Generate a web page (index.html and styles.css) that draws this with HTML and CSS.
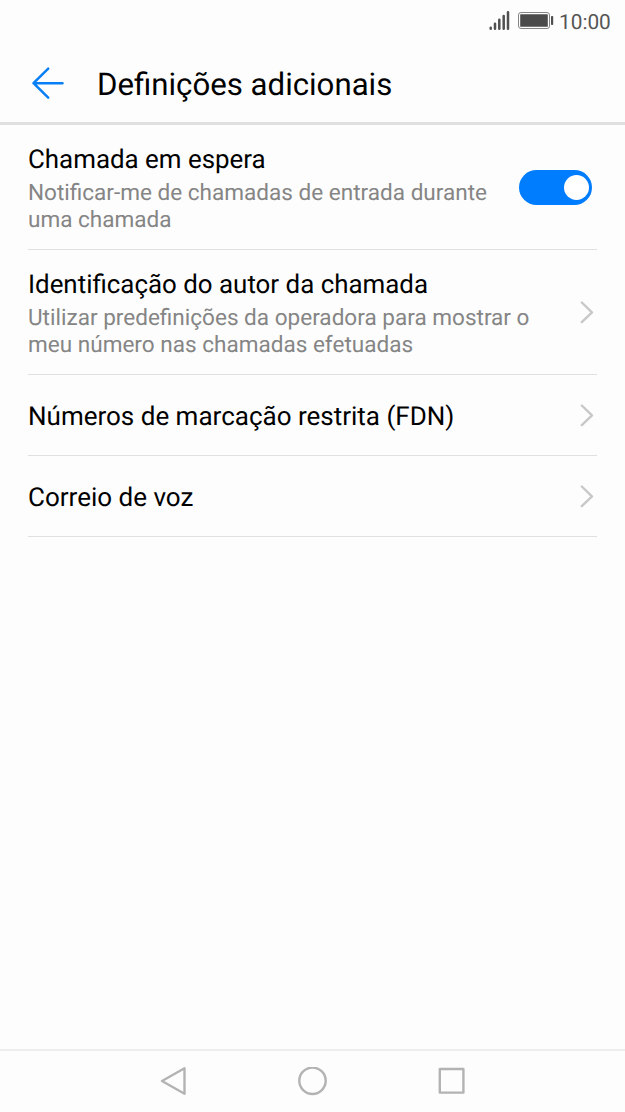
FILE: index.html
```html
<!DOCTYPE html>
<html lang="pt">
<head>
<meta charset="utf-8">
<title>Definições adicionais</title>
<link rel="stylesheet" href="styles.css">
</head>
<body>
<div class="screen">
  <div class="status">
    <svg class="signal" width="22" height="44" viewBox="0 0 22 44"><path d="M1.700 27.700v1M6 23.700v5M10.300 19.700v9M14.700 16v12.700M19 12.300v16.400" fill="none" stroke="#505050" stroke-width="2.500" stroke-linecap="round"/></svg>
    <svg class="battery" width="37" height="44" viewBox="0 0 37 44"><rect x="1.500" y="12.500" width="31" height="16" rx="2.500" fill="none" stroke="#858585"/><rect x="3.200" y="14.200" width="27.600" height="12.600" rx=".5" fill="#4b4b4b"/><rect x="34" y="16" width="2.200" height="9" rx=".8" fill="#505050"/></svg>
    <span class="clock">10:00</span>
  </div>
  <header class="header">
    <svg class="back" width="34" height="34" viewBox="0 0 34 34"><path d="M31.500 17.200H2.500M17.200 2.700L2.500 17.200l14.700 14.500" fill="none" stroke="#087ff5" stroke-width="2.500" stroke-linecap="round" stroke-linejoin="round"/></svg>
    <h1 class="title">Definições adicionais</h1>
  </header>
  <main class="list">
    <div class="row tall">
      <div class="text"><div class="name">Chamada em espera</div><div class="desc">Notificar-me de chamadas de entrada durante<br>uma chamada</div></div>
      <span class="switch"><span class="knob"></span></span>
    </div>
    <div class="row tall">
      <div class="text"><div class="name">Identificação do autor da chamada</div><div class="desc">Utilizar predefinições da operadora para mostrar o<br>meu número nas chamadas efetuadas</div></div>
      <svg class="chevron" width="14" height="24" viewBox="0 0 14 24"><path d="M1.800 2.500L12 12.300 1.800 22.100"/></svg>
    </div>
    <div class="row">
      <div class="name">Números de marcação restrita (FDN)</div>
      <svg class="chevron" width="14" height="24" viewBox="0 0 14 24"><path d="M1.800 2.500L12 12.300 1.800 22.100"/></svg>
    </div>
    <div class="row">
      <div class="name">Correio de voz</div>
      <svg class="chevron" width="14" height="24" viewBox="0 0 14 24"><path d="M1.800 2.500L12 12.300 1.800 22.100"/></svg>
    </div>
  </main>
  <nav class="nav">
    <svg width="30" height="30" viewBox="0 0 30 30"><path d="M25.500 1.300v25.400L3 14z" class="key"/></svg>
    <svg width="30" height="30" viewBox="0 0 30 30"><circle cx="14.500" cy="13.800" r="13.200" class="key"/></svg>
    <svg width="30" height="30" viewBox="0 0 30 30"><rect x="2.800" y="2" width="23.600" height="23.600" class="key"/></svg>
  </nav>
</div>
</body>
</html>
```
FILE: styles.css
```css
* { box-sizing: border-box; }
body { margin: 0; background: #fdfdfd; font-family: Roboto, sans-serif; color: #000; text-rendering: geometricPrecision; }
.screen { display: flex; flex-direction: column; height: 1112px; width: 625px; }
.status { display: flex; align-items: center; height: 44px; padding-right: 14px; justify-content: flex-end; }
.signal { margin-right: 6px; }
.battery { margin-right: 5px; }
.clock { width: 52px; padding-top: 2px; font-size: 20.800px; color: #555; line-height: 42px; white-space: nowrap; }
.header { display: flex; align-items: center; height: 81px; padding-left: 31px; border-bottom: 3px solid #e0e0e0; }
.back { margin-right: 32px; }
.title { margin: 0; padding-top: 4px; font-size: 31.200px; font-weight: 400; line-height: 40px; white-space: nowrap; }
.list { flex: 1; padding: 0 28px; }
.row { display: flex; align-items: center; justify-content: space-between; height: 81px; border-bottom: 1px solid #e0e0e0; padding-right: 3px; }
.row > .name { padding-top: 4px; font-size: 26px; }
.tall { height: 125px; }
.name { font-size: 25.900px; line-height: 34px; white-space: nowrap; }
.desc { font-size: 22.550px; line-height: 27px; color: #858585; white-space: nowrap; }
.text { align-self: flex-start; padding-top: 19px; }
.text .name { line-height: 32px; }
.text .desc { padding-top: 3px; }
.chevron { flex: none; }
.chevron path { fill: none; stroke: #c8c8c8; stroke-width: 2.400; stroke-linecap: round; stroke-linejoin: round; }
.switch { display: flex; align-items: center; justify-content: flex-end; width: 73px; height: 35px; border-radius: 18px; background: #007dff; padding: 0 3px; margin-right: 2px; }
.knob { width: 25px; height: 25px; border-radius: 50%; background: #fff; }
.nav { display: flex; justify-content: center; align-items: center; gap: 109px; height: 63px; border-top: 2px solid #ededed; }
.key { fill: none; stroke: #b3b3b3; stroke-width: 2.400; stroke-linejoin: round; }
```
